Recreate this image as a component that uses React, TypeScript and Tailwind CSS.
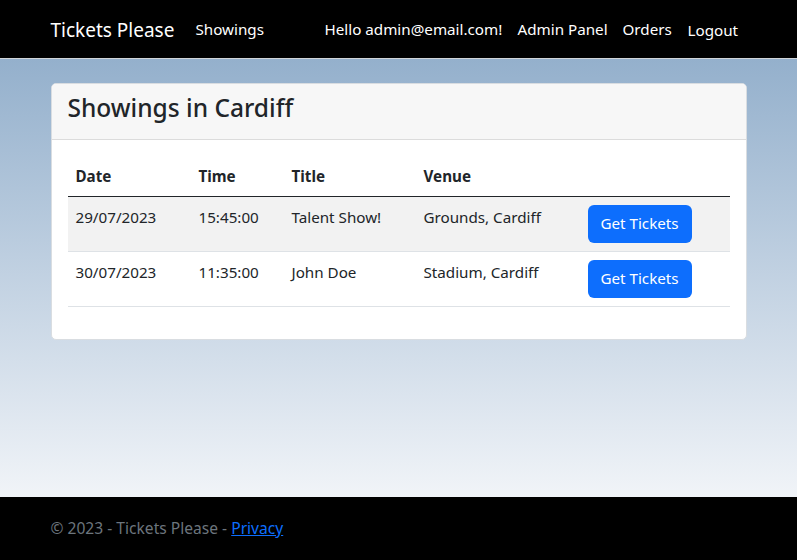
import React from "react";

const rows = [
  { date: "29/07/2023", time: "15:45:00", title: "Talent Show!", venue: "Grounds, Cardiff" },
  { date: "30/07/2023", time: "11:35:00", title: "John Doe", venue: "Stadium, Cardiff" },
];

export default function App() {
  return (
    <div
      className="flex min-h-[560px] flex-col text-[#212529]"
      style={{ fontFamily: '"Noto Sans", "Open Sans", sans-serif' }}
    >
      <nav className="h-[59px] border-b border-[#d0d4d8] bg-black">
        <div className="mx-auto flex h-full w-[696px] items-center text-white">
          <span className="mt-[3px] w-[145px] shrink-0 text-[19px]">Tickets Please</span>
          <span className="w-[129px] shrink-0 text-[15.2px]">Showings</span>
          <div className="flex items-center text-[15.2px]">
            <span className="w-[193px] shrink-0">Hello admin@email.com!</span>
            <span className="w-[105px] shrink-0">Admin Panel</span>
            <span className="w-[65px] shrink-0">Orders</span>
            <span className="mt-[3px]">Logout</span>
          </div>
        </div>
      </nav>
      <main className="flex-1 bg-gradient-to-b from-[#94b0cc] to-[#f1f4f8] pt-[24px]">
        <div className="mx-auto w-[696px] overflow-hidden rounded-[5px] border border-[#d9dde1] bg-white">
          <div className="h-[56px] border-b border-[#dcdcdc] bg-[#f7f7f7] px-[16px] pt-[9px]">
            <h3 className="text-[24.5px] leading-[1.2] font-medium">Showings in Cardiff</h3>
          </div>
          <div className="p-[16px]">
            <table className="mb-[16px] w-full border-collapse text-[15.2px]">
              <thead>
                <tr className="border-b border-[#212529]">
                  <th className="h-[40px] w-[123px] px-[8px] pt-[2px] text-left font-bold">Date</th>
                  <th className="h-[40px] w-[93px] px-[8px] pt-[2px] text-left font-bold">Time</th>
                  <th className="h-[40px] w-[132px] px-[8px] pt-[2px] text-left font-bold">Title</th>
                  <th className="h-[40px] w-[164px] px-[8px] pt-[2px] text-left font-bold">Venue</th>
                  <th className="h-[40px] px-[8px]"></th>
                </tr>
              </thead>
              <tbody>
                {rows.map((r, i) => (
                  <tr
                    key={r.date}
                    className={`border-b border-[#dee2e6] ${i === 0 ? "bg-[#f2f2f2]" : "bg-white"}`}
                  >
                    <td className="p-[8px] pt-[9px] align-top">{r.date}</td>
                    <td className="p-[8px] pt-[9px] align-top">{r.time}</td>
                    <td className="p-[8px] pt-[9px] align-top">{r.title}</td>
                    <td className="p-[8px] pt-[9px] align-top">{r.venue}</td>
                    <td className="p-[8px] align-top">
                      <button className="h-[38px] w-[104px] rounded-[6px] bg-[#0d6efd] text-[15.2px] text-white">
                        Get Tickets
                      </button>
                    </td>
                  </tr>
                ))}
              </tbody>
            </table>
          </div>
        </div>
      </main>
      <footer className="flex h-[63px] items-center bg-black">
        <div className="mx-auto w-[696px] text-[15.6px] text-[#6c757d]">
          © 2023 - Tickets Please -{" "}
          <a className="text-[#0d6efd] underline">Privacy</a>
        </div>
      </footer>
    </div>
  );
}
